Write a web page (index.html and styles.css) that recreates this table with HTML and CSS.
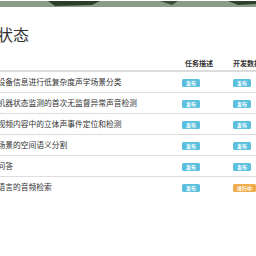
FILE: index.html
```html
<!DOCTYPE html>
<html lang="zh">
<head>
<meta charset="utf-8">
<link rel="stylesheet" href="styles.css">
</head>
<body>
<div class="banner">
  <svg width="256" height="6" viewBox="0 0 256 6" preserveAspectRatio="none">
    <rect width="256" height="6" fill="#8a9c88"/>
    <path d="M48 0 L100 0 L92 4 L55 5 Z" fill="#2c3d2a"/>
    <path d="M160 0 L178 0 L172 4 Z" fill="#3a4d38"/>
    <path d="M228 0 L256 0 L256 3 L238 4 Z" fill="#2f402e"/>
  </svg>
</div>
<div class="page">
  <h1 class="title">任务状态</h1>
  <table class="tasks">
    <thead>
      <tr><th class="name"></th><th class="col c1">任务描述</th><th class="col c2">开发数据</th></tr>
    </thead>
    <tbody>
      <tr><td class="name">利用设备信息进行低复杂度声学场景分类</td><td class="col"><span class="badge info">发布</span></td><td class="col"><span class="badge info">发布</span></td></tr>
      <tr><td class="name">用于机器状态监测的首次无监督异常声音检测</td><td class="col"><span class="badge info">发布</span></td><td class="col"><span class="badge info">发布</span></td></tr>
      <tr><td class="name">基于视频内容中的立体声事件定位和检测</td><td class="col"><span class="badge info">发布</span></td><td class="col"><span class="badge info">发布</span></td></tr>
      <tr><td class="name">声学场景的空间语义分割</td><td class="col"><span class="badge info">发布</span></td><td class="col"><span class="badge info">发布</span></td></tr>
      <tr><td class="name">音频问答</td><td class="col"><span class="badge info">发布</span></td><td class="col"><span class="badge info">发布</span></td></tr>
      <tr><td class="name">基于语言的音频检索</td><td class="col"><span class="badge info">发布</span></td><td class="col"><span class="badge warn">进行中</span></td></tr>
    </tbody>
  </table>
</div>
</body>
</html>
```
FILE: styles.css
```css
html, body {
  margin: 0;
  padding: 0;
  background: #fff;
  overflow: hidden;
}
body {
  width: 256px;
  height: 256px;
  font-family: "Noto Sans CJK SC", "Noto Sans", sans-serif;
  color: #333;
}
.banner {
  height: 6px;
  line-height: 0;
}
.page {
  margin-left: -18px;
  width: 320px;
}
.title {
  font-size: 16px;
  font-weight: 400;
  line-height: 16px;
  margin: 20px 0 0 -17px;
  color: #333;
}
.tasks {
  border-collapse: collapse;
  table-layout: fixed;
  width: 320px;
  margin-top: 14px;
  font-size: 7.75px;
}
.tasks th {
  font-weight: 700;
  font-size: 7px;
  line-height: 10px;
  padding: 2px 0 2px;
  border-bottom: 2px solid #ddd;
  text-align: left;
}
.tasks td {
  line-height: 12px;
  padding: 4px 0;
  border-top: 1px solid #ddd;
}
.tasks tbody tr:first-child td {
  border-top: none;
}
.tasks .name {
  width: 200px;
}
.tasks .c1 {
  width: 48px;
  padding-left: 3px;
}
.tasks td.col {
  vertical-align: middle;
}
.badge {
  display: inline-block;
  font-size: 5px;
  line-height: 8px;
  padding: 0 4px;
  border-radius: 1.5px;
  color: #fff;
  font-weight: 700;
  vertical-align: middle;
}
.info { background: #5bc0de; }
.warn { background: #f0ad4e; }
```
